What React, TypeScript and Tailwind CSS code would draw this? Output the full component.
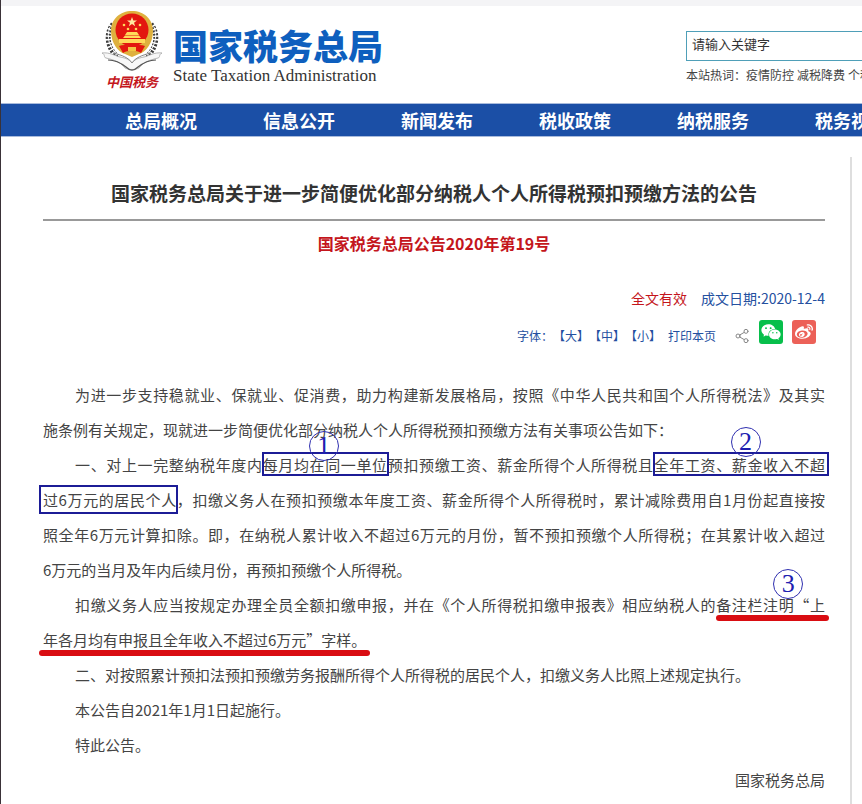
import React from "react";
import { Share2 } from "lucide-react";
import { AiFillWechat } from "react-icons/ai";
import { FaWeibo } from "react-icons/fa";

const navItems = [
  "总局概况",
  "信息公开",
  "新闻发布",
  "税收政策",
  "纳税服务",
  "税务视频",
];

const hotWords = ["疫情防控", "减税降费", "个税"];

interface LineProps {
  children: React.ReactNode;
  indent?: boolean;
  full?: boolean;
}

// one row of the announcement, full rows reach both margins
const Line: React.FC<LineProps> = ({ children, indent, full }) => (
  <span
    className={`block ${indent ? "indent-8" : ""} ${
      full ? "text-justify [text-align-last:justify]" : ""
    }`}
  >
    {children}
  </span>
);

const Badge: React.FC<{ value: string; className: string }> = ({
  value,
  className,
}) => (
  <span
    className={`absolute flex h-[30px] w-[30px] items-center justify-center rounded-full border border-[#3030b0] indent-0 font-['Liberation_Serif',serif] text-[26px] leading-none text-[#2020b0] ${className}`}
  >
    {value}
  </span>
);

const Emblem = () => (
  <svg viewBox="0 0 62 62" className="h-[62px] w-[62px]" aria-hidden="true">
    {/* wheat ring */}
    <g fill="none" stroke="#3d3d3d">
      <path d="M12 14C4 24 6 39 18 48" strokeWidth="5" strokeDasharray="2 1.5" />
      <path d="M50 14C58 24 56 39 44 48" strokeWidth="5" strokeDasharray="2 1.5" />
      <path d="M9 17C5 27 8 38 18 46M53 17C57 27 54 38 44 46" stroke="#fff" strokeWidth="1" />
    </g>
    {/* open book */}
    <path
      d="M1 43C9 42 14 46 19 47C25 48 29 50 31 53C33 50 37 48 43 47C48 46 53 42 61 43C57 45 60 47 57 48C49 50 42 52 38 58C34 60 28 60 24 58C20 52 13 50 5 48C2 47 5 45 1 43Z"
      fill="#f7f7f7"
      stroke="#a5a5a5"
      strokeWidth="0.8"
    />
    <path d="M7 50C15 50 20 53 25 57C29 61 33 61 37 57C42 53 47 50 55 50" fill="none" stroke="#555" strokeWidth="1.2" />
    <path d="M12 43C21 45 28 48 31 53C34 48 41 45 50 43" fill="none" stroke="#888" strokeWidth="1" />
    {/* national emblem */}
    <path d="M31 1C43 1 52 9 52 21C52 33 45 42 38 44L31 47L24 44C17 42 10 33 10 21C10 9 19 1 31 1Z" fill="#dfb13e" />
    <circle cx="31" cy="20" r="16.5" fill="#e3170f" />
    <path d="M31 7L32.3 10.5H36L33 12.7L34.2 16.2L31 14L27.8 16.2L29 12.7L26 10.5H29.7Z" fill="#ffe9a0" />
    <g fill="#ffd95a">
      <circle cx="23" cy="15" r="1.3" />
      <circle cx="39" cy="15" r="1.3" />
      <circle cx="27" cy="19" r="1.3" />
      <circle cx="35" cy="19" r="1.3" />
      <path d="M24 25L26 22H36L38 25ZM22 28L24 25.5H38L40 28ZM18 29H44V33H18Z" />
    </g>
    <path d="M18 36C24 34 38 34 44 36L40 43C36 40 26 40 22 43Z" fill="#e3170f" />
    <path d="M27 37H35V41H27Z" fill="#f2c544" />
  </svg>
);

const Header = () => (
  <header className="flex h-[97px] bg-white pl-[100px]">
    <div className="flex w-[62px] shrink-0 flex-col items-center pt-1">
      <Emblem />
      <span className="whitespace-nowrap font-['Noto_Sans_CJK_SC',sans-serif] text-[13px] font-bold italic leading-5 text-[#c4161c]">
        中国税务
      </span>
    </div>
    <div className="ml-[10px] w-[513px] shrink-0 whitespace-nowrap pt-[18px]">
      <div className="text-[35px] font-black leading-[42px] text-[#0e5fbe]">
        国家税务总局
      </div>
      <div className="font-['Liberation_Serif',serif] text-[17px] leading-5 text-[#333]">
        State Taxation Administration
      </div>
    </div>
    <div className="w-[300px] shrink-0 pt-6">
      <input
        type="text"
        aria-label="搜索"
        placeholder="请输入关键字"
        className="h-[30px] w-full border border-[#4f9fb8] bg-white px-[5px] pb-1 text-[13px] text-[#333] outline-none placeholder:text-[#333]"
      />
      <div className="mt-1 flex gap-[3px] text-xs leading-5 text-[#444]">
        <span className="-mr-[3px]">本站热词：</span>
        {hotWords.map((word) => (
          <a key={word} href="#">
            {word}
          </a>
        ))}
      </div>
    </div>
  </header>
);

const Nav = () => (
  <nav className="flex h-[34px] items-center gap-[66px] whitespace-nowrap border-y border-[#a9bbdc] bg-[#1b4fa6] pl-[124px] text-lg font-bold text-white">
    {navItems.map((item) => (
      <a key={item} href="#" className="leading-8">
        {item}
      </a>
    ))}
  </nav>
);

const Toolbar = () => (
  <div className="flex items-center justify-end pr-[9px] text-xs text-[#24509f]">
    <span>字体：</span>
    <button type="button">【大】</button>
    <button type="button">【中】</button>
    <button type="button">【小】</button>
    <button type="button" className="ml-[7px]">
      打印本页
    </button>
    <Share2 className="ml-[18px] h-4 w-4 text-[#888]" strokeWidth={1.5} />
    <button
      type="button"
      aria-label="微信"
      className="-mt-2 ml-[9px] flex h-6 w-6 items-center justify-center rounded-[3px] bg-[#07bf4b] text-white"
    >
      <AiFillWechat size={22} />
    </button>
    <button
      type="button"
      aria-label="微博"
      className="-mt-2 ml-[9px] flex h-6 w-6 items-center justify-center rounded-[3px] bg-[#ec6158] text-white"
    >
      <FaWeibo size={18} />
    </button>
  </div>
);

const Article = () => (
  <article className="mr-[10px] mt-5 grow border-r-2 border-[#dedede] pl-[42px] pr-[25px]">
    <h1 className="border-b-2 border-[#999] pb-[10px] pt-5 text-center text-[19px] font-bold leading-8 text-[#333]">
      国家税务总局关于进一步简便优化部分纳税人个人所得税预扣预缴方法的公告
    </h1>
    <h2 className="mt-[10px] text-center text-base font-bold leading-6 text-[#c4161c]">
      国家税务总局公告2020年第19号
    </h2>
    <div className="mt-[31px] flex justify-end gap-[14px] text-sm leading-6 text-[#24509f]">
      <span className="text-[#c4161c]">全文有效</span>
      <span>成文日期:2020-12-4</span>
    </div>
    <div className="mt-[18px]">
      <Toolbar />
    </div>

    <div className="mt-[33px] text-[15px] leading-[35px] text-[#444]">
      <p>
        <Line indent full>
          为进一步支持稳就业、保就业、促消费，助力构建新发展格局，按照《中华人民共和国个人所得税法》及其实
        </Line>
        <Line>
          施条例有关规定，现就进一步简便优化部分纳税人个人所得税预扣预缴方法有关事项公告如下：
        </Line>
      </p>
      <p>
        <Line indent full>
          一、对上一完整纳税年度内
          <span className="relative">
            每月均在同一单位
            <span className="absolute -inset-x-px -bottom-px -top-0.5 border-2 border-[#1c1c96]" />
            <Badge value="1" className="-top-[23px] left-[46px]" />
          </span>
          预扣预缴工资、薪金所得个人所得税且
          <span className="relative">
            全年工资、薪金收入不超
            <span className="absolute -bottom-px -left-px -right-1 -top-0.5 border-2 border-[#1c1c96]" />
            <Badge value="2" className="-top-[27px] left-[77px]" />
          </span>
        </Line>
        <Line full>
          <span className="relative">
            过6万元的居民个人
            <span className="absolute -bottom-1 -left-1 -right-px -top-1 border-2 border-[#1c1c96]" />
          </span>
          ，扣缴义务人在预扣预缴本年度工资、薪金所得个人所得税时，累计减除费用自1月份起直接按
        </Line>
        <Line full>
          照全年6万元计算扣除。即，在纳税人累计收入不超过6万元的月份，暂不预扣预缴个人所得税；在其累计收入超过
        </Line>
        <Line>6万元的当月及年内后续月份，再预扣预缴个人所得税。</Line>
      </p>
      <p>
        <Line indent full>
          扣缴义务人应当按规定办理全员全额扣缴申报，并在《个人所得税扣缴申报表》相应纳税人的
          <span className="relative">
            备注栏注明“上
            <span className="absolute -bottom-1.5 -right-1 left-0 h-[6px] rounded-full bg-[#d90d12]" />
            <Badge value="3" className="-top-[25px] left-[57px]" />
          </span>
        </Line>
        <Line>
          <span className="relative">
            年各月均有申报且全年收入不超过6万元”字样。
            <span className="absolute -bottom-1.5 -left-1 -right-1 h-[6px] rounded-full bg-[#d90d12]" />
          </span>
        </Line>
      </p>
      <p className="indent-8">
        二、对按照累计预扣法预扣预缴劳务报酬所得个人所得税的居民个人，扣缴义务人比照上述规定执行。
      </p>
      <p className="indent-8">本公告自2021年1月1日起施行。</p>
      <p className="indent-8">特此公告。</p>
      <p className="text-right">国家税务总局</p>
    </div>
  </article>
);

const App = () => {
  return (
    <div
      lang="zh-CN"
      className="flex min-h-screen flex-col overflow-x-hidden border-l border-[#3a3238] bg-white font-['Noto_Sans_CJK_SC',sans-serif]"
    >
      <div className="h-[6px] bg-[#f4f4f6]" />
      <Header />
      <Nav />
      <Article />
    </div>
  );
};

export default App;
